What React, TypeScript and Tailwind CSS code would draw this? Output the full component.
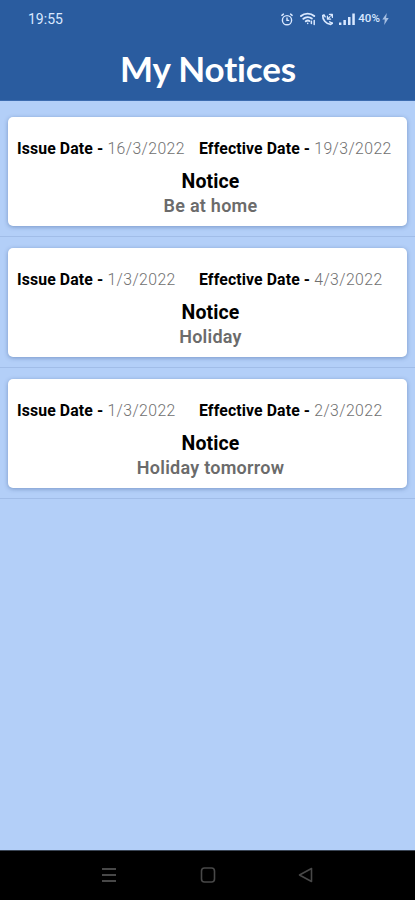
import React from 'react';

interface Notice {
    id:            number;
    issueDate:     string;
    effectiveDate: string;
    message:       string;
}

const notices: Notice[] = [
    { id: 1, issueDate: '16/3/2022', effectiveDate: '19/3/2022', message: 'Be at home' },
    { id: 2, issueDate: '1/3/2022',  effectiveDate: '4/3/2022',  message: 'Holiday' },
    { id: 3, issueDate: '1/3/2022',  effectiveDate: '2/3/2022',  message: 'Holiday tomorrow' },
];

const AlarmIcon = () => (
    <svg width="12" height="13" viewBox="0 0 12 13" fill="none" stroke="currentColor" strokeWidth="1.4" strokeLinecap="round">
        <circle cx="6" cy="7.2" r="4.6" />
        <path d="M6 5V7.4H7.6M0.9 2.4 2.4 1.1M11.1 2.4 9.6 1.1" />
    </svg>
);

const WifiIcon = () => (
    <svg width="17" height="14" viewBox="0 0 17 14" fill="none" stroke="currentColor" strokeWidth="1.9" strokeLinecap="round">
        <path d="M1 4C4.6 0.8 10.6 0.8 14.2 4M3.4 6.8C5.8 4.7 9.4 4.7 11.8 6.6M5.8 9.3C7 8.3 8.4 8.3 9.4 9" />
        <path d="M7.7 11.3V11.4M11.4 9.2V11.6M14.2 8.6V12.4" strokeWidth="1.5" />
    </svg>
);

const CallIcon = () => (
    <svg width="13" height="13" viewBox="0 0 13 13" fill="none" stroke="currentColor" strokeLinecap="round" strokeLinejoin="round">
        <path d="M1.8 2.6C1.4 6.4 4.8 11 9.6 11.4L11.2 10.2" strokeWidth="1.7" />
        <path d="M1.8 2.6 3 1.8 4.2 3.8M8.6 8.8 11.2 10.2" strokeWidth="1.4" />
        <path d="M6.4 3V6.2H9.6M6.8 5.8 8.6 4M8.4 1.4H11.4V4.4M11 1.8 9.8 3" strokeWidth="1.2" />
    </svg>
);

const SignalIcon = () => (
    <svg width="16" height="12" viewBox="0 0 16 12" fill="currentColor">
        <rect x="0" y="9.5" width="2.4" height="2.5" />
        <rect x="4.4" y="7" width="2.5" height="5" />
        <rect x="9" y="4" width="2.5" height="8" />
        <rect x="13.3" y="0.5" width="2.5" height="11.5" />
    </svg>
);

const BoltIcon = () => (
    <svg width="7" height="12" viewBox="0 0 7 12" fill="currentColor">
        <path d="M4.8 0 0.3 6.6H2.8L2.2 12 6.7 4.9H4.1Z" />
    </svg>
);

const StatusBar = () => (
    <div className="flex h-[38px] items-center pl-7 pr-[26px] text-[#d9e8ff]">
        <span className="flex-1 text-[14px] leading-none">19:55</span>
        <AlarmIcon />
        <span className="ml-[7px]"><WifiIcon /></span>
        <span className="ml-[4px]"><CallIcon /></span>
        <span className="ml-[5px]"><SignalIcon /></span>
        <span className="ml-[3px] text-[11.5px] font-medium leading-none tracking-[0.1px]">40%</span>
        <span className="ml-[2px] opacity-70"><BoltIcon /></span>
    </div>
);

const DateField: React.FC<{ label: string; value: string }> = ({ label, value }) => (
    <p className="w-[182px] shrink-0 whitespace-nowrap text-[15.8px] font-light leading-[18px] tracking-[0.4px] text-[#707070]">
        <span className="font-bold tracking-[0.12px] text-black">{label} - </span>
        {value}
    </p>
);

const NoticeCard: React.FC<{ notice: Notice }> = ({ notice }) => (
    <li className="h-[131px] border-b border-[#a1bde8] px-2 pt-[11px]">
        <article className="h-[109px] rounded-[5px] bg-white pt-[23px] text-center shadow-[0_1px_4px_rgba(50,85,140,0.45)]">
            <div className="flex pl-[9px] text-left">
                <DateField label="Issue Date" value={notice.issueDate} />
                <DateField label="Effective Date" value={notice.effectiveDate} />
            </div>
            <h2 className="mt-[11px] pl-[6px] text-[19.5px] font-bold leading-[25px] tracking-[0.1px] text-black">Notice</h2>
            <p className="pl-[6px] text-[18px] font-semibold leading-[24px] tracking-[0.25px] text-[#6b6b6b]">{notice.message}</p>
        </article>
    </li>
);

const NavBar = () => (
    <nav className="flex h-[50px] items-center justify-between border-t border-[#3b4656] bg-black px-[101px] pb-[2px] text-[#484848]">
        <svg width="16" height="16" viewBox="0 0 16 16" fill="none" stroke="currentColor" strokeWidth="1.8">
            <path d="M1 2H15M1 8H15M1 14H15" />
        </svg>
        <svg width="16" height="16" viewBox="0 0 16 16" fill="none" stroke="currentColor" strokeWidth="1.6">
            <rect x="1.5" y="1" width="13" height="14" rx="3" />
        </svg>
        <svg width="16" height="16" viewBox="0 0 16 16" fill="none" stroke="currentColor" strokeWidth="1.6" strokeLinejoin="round">
            <path d="M1.5 8 13.5 1.5V14.5Z" />
        </svg>
    </nav>
);

export default function App() {
    return (
        <div className="flex h-[900px] w-full flex-col overflow-hidden bg-[#b3cff8] font-['Roboto',sans-serif]">
            <header className="h-[101px] shrink-0 border-b border-[#3d6cb0] bg-[#2a5c9f]">
                <StatusBar />
                <h1 className="pl-[1px] text-center font-['Lato',sans-serif] text-[35px] font-bold leading-[60px] tracking-[-0.15px] text-white">
                    My Notices
                </h1>
            </header>
            <ul className="flex-1 pt-[5px]">
                {notices.map(n => <NoticeCard key={n.id} notice={n} />)}
            </ul>
            <NavBar />
        </div>
    );
}
